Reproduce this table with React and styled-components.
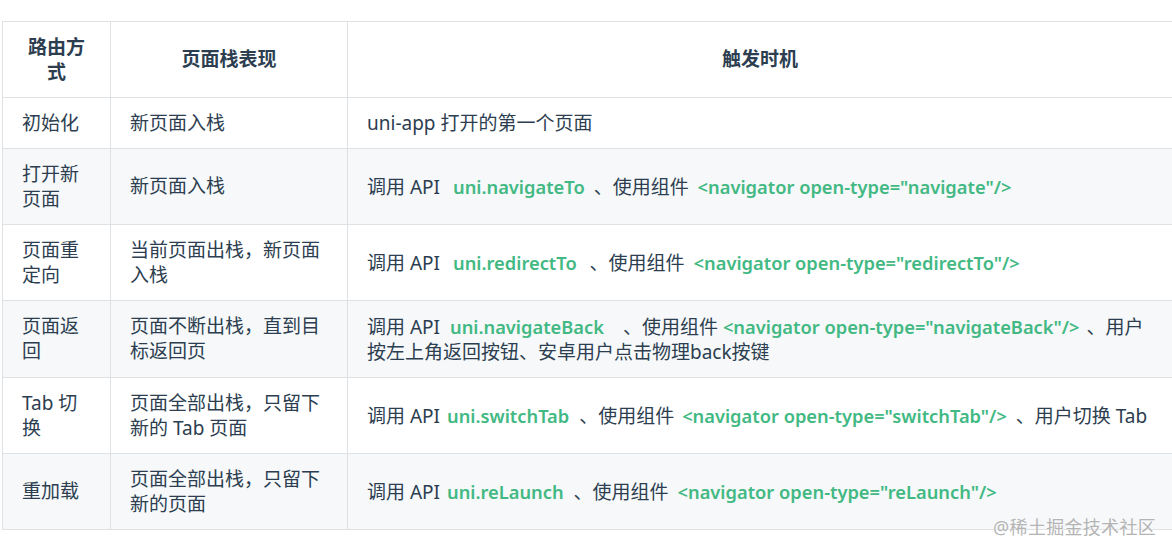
import React from "react";
import styled, { createGlobalStyle } from "styled-components";

const GlobalStyle = createGlobalStyle`
  html, body {
    margin: 0;
    padding: 0;
    background: #ffffff;
    overflow: hidden;
  }
  body {
    font-family: "Noto Sans", "Noto Sans CJK SC", sans-serif;
    color: #2c3e50;
  }
`;

const Page = styled.div`
  position: relative;
  width: 1172px;
  height: 556px;
  padding: 21px 0 0 2px;
  box-sizing: border-box;
`;

const Table = styled.table`
  border-collapse: collapse;
  table-layout: fixed;
  width: 1171px;
  font-size: 19px;
  line-height: 25px;
`;

const Row = styled.tr`
  background: ${(p) => (p.$striped ? "#f6f8fa" : "#ffffff")};
`;

const Head = styled.th`
  border: 1px solid #dfe2e5;
  padding: 12.5px 19px;
  font-weight: 700;
  text-align: center;
  vertical-align: middle;
  color: #2c3e50;
`;

const Cell = styled.td`
  border: 1px solid #dfe2e5;
  padding: 12.5px 19px;
  text-align: left;
  vertical-align: middle;
  color: #2c3e50;
`;

const Code = styled.code`
  font-family: "Noto Sans", "Noto Sans CJK SC", sans-serif;
  font-weight: 600;
  font-size: 18.3px;
  color: #42b983;
  padding: 0 ${(p) => p.$r ?? 4}px 0 ${(p) => p.$l ?? 4}px;
`;

const Watermark = styled.div`
  position: absolute;
  right: 16px;
  bottom: 17px;
  font-size: 18px;
  color: #b4b4b4;
  letter-spacing: 0.3px;
  text-shadow: 0 0 2px #fff;
`;

const rows = [
  { way: "初始化", stack: "新页面入栈", when: <>uni-app 打开的第一个页面</> },
  {
    way: "打开新页面",
    stack: "新页面入栈",
    when: (
      <>
        调用 API <Code $l={8} $r={4}>uni.navigateTo</Code> 、使用组件{" "}
        <Code $l={4} $r={0}>&lt;navigator open-type="navigate"/&gt;</Code>
      </>
    ),
  },
  {
    way: "页面重定向",
    stack: "当前页面出栈，新页面入栈",
    when: (
      <>
        调用 API <Code $l={8} $r={8}>uni.redirectTo</Code> 、使用组件{" "}
        <Code $l={4} $r={0}>&lt;navigator open-type="redirectTo"/&gt;</Code>
      </>
    ),
  },
  {
    way: "页面返回",
    stack: "页面不断出栈，直到目标返回页",
    when: (
      <>
        调用 API <Code $l={5} $r={14}>uni.navigateBack</Code> 、使用组件{" "}
        <Code $l={0} $r={2}>&lt;navigator open-type="navigateBack"/&gt;</Code> 、用户按左上角返回按钮、安卓用户点击物理back按键
      </>
    ),
  },
  {
    way: "Tab 切换",
    stack: "页面全部出栈，只留下新的 Tab 页面",
    when: (
      <>
        调用 API <Code $l={2} $r={5}>uni.switchTab</Code> 、使用组件{" "}
        <Code $l={3} $r={4}>&lt;navigator open-type="switchTab"/&gt;</Code> 、用户切换 Tab
      </>
    ),
  },
  {
    way: "重加载",
    stack: "页面全部出栈，只留下新的页面",
    when: (
      <>
        调用 API <Code $l={2} $r={5}>uni.reLaunch</Code> 、使用组件{" "}
        <Code $l={4} $r={0}>&lt;navigator open-type="reLaunch"/&gt;</Code>
      </>
    ),
  },
];

export default function App() {
  return (
    <Page>
      <GlobalStyle />
      <Table>
        <colgroup>
          <col style={{ width: 108 }} />
          <col style={{ width: 237 }} />
          <col />
        </colgroup>
        <thead>
          <Row>
            <Head>路由方式</Head>
            <Head>页面栈表现</Head>
            <Head>触发时机</Head>
          </Row>
        </thead>
        <tbody>
          {rows.map((r, i) => (
            <Row key={r.way} $striped={i % 2 === 1}>
              <Cell>{r.way}</Cell>
              <Cell>{r.stack}</Cell>
              <Cell>{r.when}</Cell>
            </Row>
          ))}
        </tbody>
      </Table>
      <Watermark>@稀土掘金技术社区</Watermark>
    </Page>
  );
}
